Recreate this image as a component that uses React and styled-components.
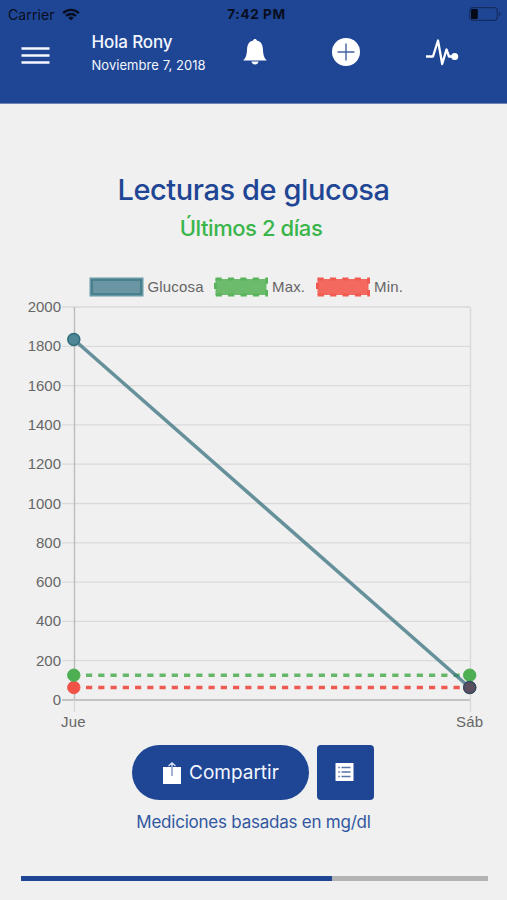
import React from "react";
import styled, { createGlobalStyle } from "styled-components";

const BLUE = "#1f4694";

const GlobalStyle = createGlobalStyle`
  *, *::before, *::after { box-sizing: border-box; }
  body { margin: 0; background: #f0f0f0; }
  button { border: 0; padding: 0; font: inherit; color: inherit; background: none; }
`;

const Screen = styled.div`
  display: flex;
  flex-direction: column;
  width: 507px;
  height: 900px;
  overflow: hidden;
  background: #f0f0f0;
  font-family: Inter, "Liberation Sans", sans-serif;
`;

const Header = styled.header`
  height: 104px;
  flex: none;
  background: ${BLUE};
  border-bottom: 1px solid #7184b8;
`;

const StatusBar = styled.div`
  display: grid;
  grid-template-columns: 1fr auto 1fr;
  align-items: center;
  height: 27px;
  padding: 0 6px 0 8px;
  color: #080e20;
  font-size: 14px;
  line-height: 27px;
`;

const Carrier = styled.div`
  display: flex;
  align-items: center;
  gap: 7px;
  letter-spacing: 0.1px;
`;

const Clock = styled.div`
  padding-left: 4px;
  padding-top: 1px;
  font-size: 13.5px;
  font-weight: 700;
  letter-spacing: 0.6px;
`;

const BatterySlot = styled.div`
  display: flex;
  justify-content: flex-end;
`;

const NavBar = styled.nav`
  display: grid;
  grid-template-columns: 71px 137px 94px 88px 104px;
  height: 50px;
  align-items: center;
`;

const NavButton = styled.button`
  display: flex;
  align-items: center;
  justify-content: center;
  height: 50px;
  padding-top: ${(p) => p.$drop || "0"};
`;

const Greeting = styled.div`
  padding-left: 20.5px;
  padding-top: 2px;
  color: #f3f6ff;
  white-space: nowrap;
`;

const UserName = styled.div`
  font-size: 17px;
  line-height: 24px;
  font-weight: 500;
  letter-spacing: -0.15px;
`;

const Today = styled.div`
  font-size: 13px;
  line-height: 22px;
  letter-spacing: 0.05px;
`;

const Content = styled.main`
  display: flex;
  flex-direction: column;
  align-items: center;
  flex: 1;
`;

const Title = styled.h1`
  margin: 66px 0 0;
  color: ${BLUE};
  font-size: 29px;
  font-weight: 500;
  line-height: 40px;
  letter-spacing: -0.42px;
  white-space: nowrap;
`;

const Subtitle = styled.h2`
  margin: 3px 0 0;
  padding-right: 5px;
  color: #39b54a;
  font-size: 22px;
  font-weight: 500;
  line-height: 30px;
  letter-spacing: -0.42px;
  white-space: nowrap;
`;

const Chart = styled.svg`
  display: block;
  flex: none;
  margin-top: 27px;
  font-family: "Liberation Sans", Arial, sans-serif;
  font-size: 15px;
  fill: #666;
`;

const Actions = styled.div`
  display: flex;
  gap: 8px;
  margin-top: 9px;
  padding-right: 1px;
`;

const ShareButton = styled.button`
  display: flex;
  align-items: center;
  gap: 8px;
  width: 177px;
  height: 55px;
  padding-left: 31px;
  border-radius: 28px;
  background: ${BLUE};
  color: #f3f6ff;
  font-size: 19px;
`;

const ListButton = styled.button`
  display: flex;
  align-items: center;
  justify-content: center;
  width: 57px;
  height: 55px;
  padding: 0 1.5px 2px 0;
  border-radius: 4px;
  background: ${BLUE};
`;

const UnitsNote = styled.p`
  margin: 9px 0 0;
  color: #3157a0;
  font-size: 17px;
  line-height: 26px;
  letter-spacing: -0.23px;
  white-space: nowrap;
`;

const Progress = styled.div`
  width: 467px;
  height: 5px;
  margin: auto 0 19px 1px;
  background: #b3b3b3;
`;

const ProgressFill = styled.div`
  width: 311px;
  height: 100%;
  background: ${BLUE};
`;

const WifiIcon = () => (
  <svg width="18" height="13" viewBox="0 0 18 13" fill="none" stroke="#080e20" strokeWidth="2.4">
    <path d="M1.2 5.1a11 11 0 0 1 15.6 0" />
    <path d="M4.1 8a7 7 0 0 1 9.8 0" />
    <path d="M9 12.6 6.2 9.8a4 4 0 0 1 5.6 0z" fill="#080e20" stroke="none" />
  </svg>
);

const BatteryIcon = () => (
  <svg width="32" height="14" viewBox="0 0 32 14">
    <rect x="0.7" y="0.7" width="27.6" height="12.6" rx="3" fill="none" stroke="#142c60" strokeWidth="1.2" />
    <rect x="2" y="2" width="6.8" height="10" rx="1.2" fill="#050a16" />
    <path d="M30 4.8v4.4q1.5-.7 1.5-2.2T30 4.8z" fill="#142c60" />
  </svg>
);

const MenuIcon = () => (
  <svg width="29" height="18" viewBox="0 0 29 18" stroke="#f6f8ff" strokeWidth="2.3">
    <path d="M.5 1.5h28M.5 8.5h28M.5 15.5h28" />
  </svg>
);

const BellIcon = () => (
  <svg width="24" height="28" viewBox="0 0 24 28" fill="#fff">
    <path d="M12 1c1 0 1.7.6 1.8 1.5 4 .9 5.8 3.9 6.1 8.2.3 4.4.4 8.4 3.6 11.3v.6H.5V22c3.2-2.9 3.3-6.9 3.6-11.3.3-4.3 2.1-7.3 6.1-8.2C10.3 1.6 11 1 12 1z" />
    <path d="M8.4 23.6h7.2c-.5 2-1.7 3-3.6 3s-3.1-1-3.6-3z" />
  </svg>
);

const AddIcon = () => (
  <svg width="28" height="28" viewBox="0 0 28 28">
    <circle cx="14" cy="14" r="14" fill="#fff" />
    <path d="M5.5 14h17M14 5.5v17" stroke="#45629f" strokeWidth="1.4" />
  </svg>
);

const PulseIcon = () => (
  <svg width="33" height="29" viewBox="0 0 33 29">
    <path d="M0 18.5h7L12 2.5l4.2 23.5 4.3-14.5 2.5 7H29" fill="none" stroke="#fff" strokeWidth="2.3" strokeLinejoin="round" />
    <circle cx="28.7" cy="18.5" r="3.5" fill="#fff" />
  </svg>
);

const ShareIcon = () => (
  <svg width="18" height="22" viewBox="0 0 18 22">
    <path d="M0 5h18v17H0z" fill="#fff" />
    <path d="M9 5v9" stroke="#8296c4" strokeWidth="1.5" />
    <path d="M9 5V1M5.5 4 9 .8 12.5 4" fill="none" stroke="#d9e1f5" strokeWidth="1.2" />
  </svg>
);

const ListIcon = () => (
  <svg width="19" height="18" viewBox="0 0 19 18">
    <path d="M.5 0h18v18H.5z" fill="#fff" />
    <path d="M6.5 4.5h9M6.5 9h9M6.5 13.5h9M3.3 4.5h1.5M3.3 9h1.5M3.3 13.5h1.5" stroke="#5872aa" strokeWidth="1.3" />
  </svg>
);

const TICKS = [2000, 1800, 1600, 1400, 1200, 1000, 800, 600, 400, 200, 0];
const LEFT = 74;
const RIGHT = 470;
const TOP = 37;
const STEP = 39.3;
const BASE = TOP + STEP * 10;

const LEGEND = [
  { label: "Glucosa", x: 91, width: 56, fill: "#6a96a4", stroke: "#407786" },
  { label: "Max.", x: 215.5, width: 33, fill: "#6cbb6c", stroke: "#5ab35d", dash: "6.2 6.2" },
  { label: "Min.", x: 317.5, width: 29, fill: "#f4695f", stroke: "#f05a50", dash: "6.2 6.2" },
];

const GlucoseChart = () => (
  <Chart width="507" height="466" viewBox="0 0 507 466">
    {LEGEND.map((item) => (
      <g key={item.label}>
        <rect x={item.x} y="9" width="51" height="16" fill={item.fill} />
        <rect
          x={item.x} y="9" width="51" height="16" fill="none"
          stroke={item.dash ? item.stroke : "#6899a6"} strokeWidth="3" strokeDasharray={item.dash}
        />
        {!item.dash && <rect x={item.x + 1} y="10" width="49" height="14" fill="none" stroke={item.stroke} strokeWidth="1.5" />}
        <text x={item.x + 56.5} y="22" textLength={item.width}>{item.label}</text>
      </g>
    ))}
    {TICKS.map((tick, i) => (
      <g key={tick}>
        <path d={`M62 ${TOP + i * STEP}H${RIGHT}`} stroke={tick ? "#dadada" : "#b5b5b5"} strokeWidth="1.3" />
        <text x="61" y={TOP + i * STEP + 5} textAnchor="end">{tick}</text>
      </g>
    ))}
    <path d={`M${LEFT + 0.5} ${TOP}V${BASE}`} stroke="#bcbcbc" strokeWidth="1.4" />
    <path d={`M${LEFT + 0.5} ${BASE}V442M${RIGHT + 0.5} ${TOP}V442`} stroke="#d8d8d8" strokeWidth="1.3" />
    <g fill="#f05248" stroke="#ee5a50">
      <path d="M86 417.5H470" strokeWidth="3.4" strokeDasharray="6.2 6.05" fill="none" />
      <circle cx="73.8" cy="417.5" r="6.2" />
      <circle cx="469.7" cy="417.5" r="6.2" />
    </g>
    <g fill="#4daf52" stroke="#4faf55">
      <path d="M86 405.2H470" stroke="#66b76a" strokeWidth="3.4" strokeDasharray="6.2 6.05" fill="none" />
      <circle cx="73.8" cy="405.2" r="6.2" />
      <circle cx="469.7" cy="405.2" r="6.2" />
    </g>
    <path d="M73.8 69.5 469.7 417.5" stroke="#38717f" strokeOpacity="0.75" strokeWidth="3.6" />
    <circle cx="73.8" cy="69.5" r="6" fill="#4f8796" stroke="#326c7b" strokeWidth="1.5" />
    <circle cx="469.7" cy="417.5" r="6" fill="#5b4f60" stroke="#304c63" strokeWidth="1.5" />
    <text x="61" y="457" textLength="24.5">Jue</text>
    <text x="456" y="457" textLength="27">Sáb</text>
  </Chart>
);

export default function App() {
  return (
    <Screen>
      <GlobalStyle />
      <Header>
        <StatusBar>
          <Carrier>Carrier <WifiIcon /></Carrier>
          <Clock>7:42 PM</Clock>
          <BatterySlot><BatteryIcon /></BatterySlot>
        </StatusBar>
        <NavBar>
          <NavButton $drop="7px" aria-label="Menú"><MenuIcon /></NavButton>
          <Greeting>
            <UserName>Hola Rony</UserName>
            <Today>Noviembre 7, 2018</Today>
          </Greeting>
          <NavButton aria-label="Notificaciones"><BellIcon /></NavButton>
          <NavButton aria-label="Agregar"><AddIcon /></NavButton>
          <NavButton aria-label="Lecturas"><PulseIcon /></NavButton>
        </NavBar>
      </Header>
      <Content>
        <Title>Lecturas de glucosa</Title>
        <Subtitle>Últimos 2 días</Subtitle>
        <GlucoseChart />
        <Actions>
          <ShareButton><ShareIcon />Compartir</ShareButton>
          <ListButton aria-label="Lista"><ListIcon /></ListButton>
        </Actions>
        <UnitsNote>Mediciones basadas en mg/dl</UnitsNote>
        <Progress><ProgressFill /></Progress>
      </Content>
    </Screen>
  );
}
